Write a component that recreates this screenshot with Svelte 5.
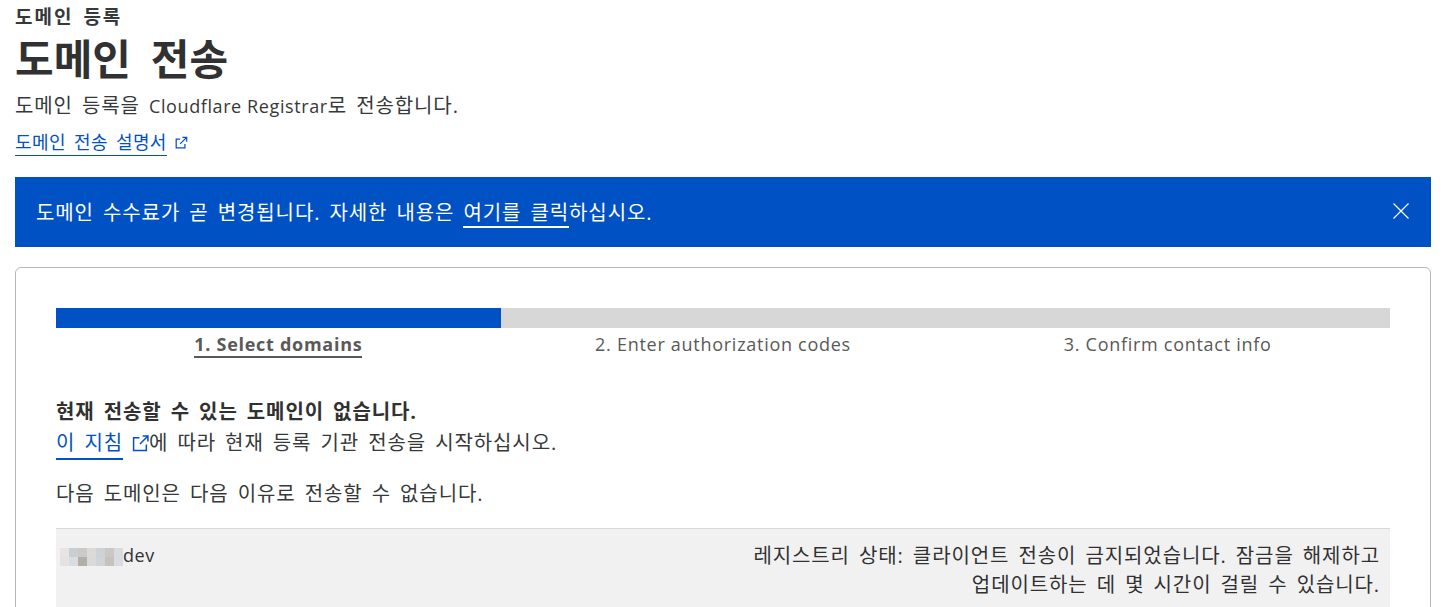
<script lang="ts">
	// Steps of the transfer wizard
	const steps = [
		{ label: '1. Select domains', active: true },
		{ label: '2. Enter authorization codes', active: false },
		{ label: '3. Confirm contact info', active: false }
	];

	// Redacted part of the domain name
	const mosaic = [
		'#e8e4e3', '#c9ced3', '#cacaca', '#dcdad9', '#cdd2d6', '#cbc7c4', '#d8dce0',
		'#e6e2e1', '#d8dde2', '#b2aeaa', '#d9d9d9', '#d0d4d8', '#c6c2c0', '#d8dce0'
	];
</script>

<div class="page">
	<header class="head">
		<div class="crumb">도메인 등록</div>
		<h1>도메인 전송</h1>
		<p class="lead">도메인 등록을 <span class="latin">Cloudflare Registrar</span>로 전송합니다.</p>
		<p class="docs">
			<a href="#docs">도메인 전송 설명서</a>
			<svg class="ext small" viewBox="0 0 16 16" aria-hidden="true">
				<path d="M12.5 9v4.5h-10v-10H7M9.5 1.5h5v5M14.5 1.5L7 9" />
			</svg>
		</p>
	</header>

	<div class="banner">
		<span>도메인 수수료가 곧 변경됩니다. 자세한 내용은 <a href="#fees">여기를 클릭</a>하십시오.</span>
		<svg class="close" viewBox="0 0 16 16" aria-hidden="true">
			<path d="M0.5 0.5L15.5 15.5M15.5 0.5L0.5 15.5" />
		</svg>
	</div>

	<section class="card">
		<div class="progress"><div class="fill"></div></div>
		<ol class="steps">
			{#each steps as step}
				<li><span class:active={step.active}>{step.label}</span></li>
			{/each}
		</ol>

		<div class="notice">
			<strong>현재 전송할 수 있는 도메인이 없습니다.</strong>
			<div class="guide">
				<a href="#guide">이 지침</a>
				<svg class="ext" viewBox="0 0 16 16" aria-hidden="true">
					<path d="M13.5 9v5.5h-12v-12H7M10 1h5v5M15 1L7.5 8.5" />
				</svg><span>에 따라 현재 등록 기관 전송을 시작하십시오.</span>
			</div>
		</div>

		<p class="reason">다음 도메인은 다음 이유로 전송할 수 없습니다.</p>

		<div class="row">
			<div class="domain">
				<span class="mosaic">
					{#each mosaic as c}
						<i style="background: {c}"></i>
					{/each}
				</span><span class="latin">dev</span>
			</div>
			<div class="status">
				레지스트리 상태: 클라이언트 전송이 금지되었습니다. 잠금을 해제하고<br />
				업데이트하는 데 몇 시간이 걸릴 수 있습니다.
			</div>
		</div>
	</section>
</div>

<style>
	:global(body) {
		margin: 0;
		background: #fff;
		overflow: hidden;
	}

	.page {
		height: 607px;
		overflow: hidden;
		padding: 0 25px 0 15px;
		font-family: 'Open Sans', 'Noto Sans CJK KR', sans-serif;
		font-size: 20px;
		letter-spacing: 0.9px;
		word-spacing: 3px;
		color: #36393a;
		box-sizing: border-box;
	}

	.latin {
		font-size: 18px;
		letter-spacing: 0.6px;
		word-spacing: 0;
	}

	.head {
		height: 177px;
		padding-top: 5px;
		box-sizing: border-box;
	}

	.crumb {
		font-size: 19px;
		font-weight: 700;
		line-height: 24px;
		letter-spacing: 2px;
		color: #36393a;
	}

	h1 {
		margin: 0;
		padding-top: 4px;
		font-size: 42px;
		font-weight: 700;
		line-height: 52px;
		letter-spacing: 0;
		word-spacing: 9px;
		color: #313131;
	}

	.lead {
		margin: 0;
		line-height: 26px;
		padding-top: 8px;
	}

	.docs {
		margin: 0;
		padding-top: 10px;
		font-size: 18px;
		letter-spacing: 0.4px;
		word-spacing: 3px;
		line-height: 26px;
		display: flex;
		align-items: center;
		gap: 7px;
	}

	a {
		color: #0051c3;
		text-decoration: none;
		border-bottom: 2px solid #0051c3;
	}

	.docs a {
		border-bottom-width: 1px;
	}

	.ext {
		width: 17px;
		height: 17px;
		fill: none;
		stroke: #0051c3;
		stroke-width: 1.4;
	}

	.ext.small {
		width: 14px;
		height: 14px;
	}

	.banner {
		height: 70px;
		background: #0051c3;
		color: #fff;
		padding: 0 22px 2px 21px;
		display: flex;
		align-items: center;
		justify-content: space-between;
		box-sizing: border-box;
	}

	.banner a {
		color: #fff;
		border-bottom-color: #fff;
	}

	.close {
		width: 16px;
		height: 16px;
		fill: none;
		stroke: #fff;
		stroke-width: 1.2;
	}

	.card {
		margin-top: 20px;
		border: 1px solid #b7b7b7;
		border-radius: 6px;
		padding: 40px;
		background: #fff;
	}

	.progress {
		height: 20px;
		background: #d7d7d7;
	}

	.fill {
		width: 33.36%;
		height: 100%;
		background: #0051c3;
	}

	.steps {
		list-style: none;
		margin: 0;
		padding: 3px 0 0;
		display: grid;
		grid-template-columns: repeat(3, 1fr);
		text-align: center;
		font-size: 18px;
		letter-spacing: 0.72px;
		word-spacing: 0;
		line-height: 26px;
		color: #595959;
	}

	.steps .active {
		font-weight: 700;
		display: inline-block;
		border-bottom: 2px solid #595959;
		line-height: 24px;
	}

	.notice {
		margin-top: 39px;
		line-height: 30px;
	}

	.notice strong {
		display: block;
		color: #313131;
	}

	.guide {
		display: flex;
		align-items: center;
		height: 30px;
		margin-top: 1px;
	}

	.guide a {
		margin-right: 9px;
		margin-bottom: -1px;
	}

	.reason {
		margin: 21px 0 0;
		line-height: 30px;
	}

	.row {
		margin-top: 19px;
		display: flex;
		justify-content: space-between;
		background: #f1f1f1;
		border-top: 1px solid #d9d9d9;
		padding: 12px 10px 12px 4px;
		line-height: 29px;
		color: #313131;
	}

	.domain {
		display: flex;
		align-items: flex-start;
	}

	.mosaic {
		display: grid;
		grid-template-columns: repeat(7, 9px);
		grid-auto-rows: 9px;
		margin-top: 7px;
	}

	.status {
		text-align: right;
	}
</style>
